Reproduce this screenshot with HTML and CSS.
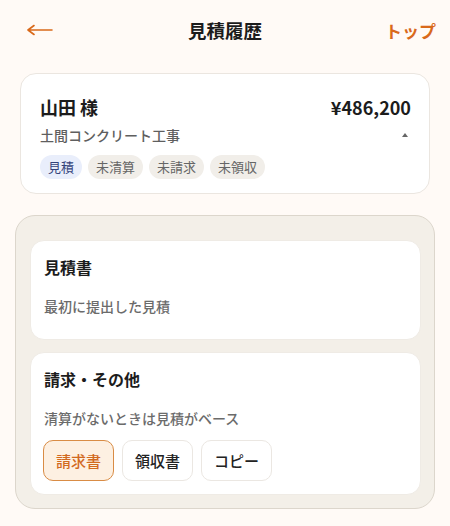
FILE: index.html
```html
<!DOCTYPE html>
<html lang="ja">
<head>
<meta charset="utf-8">
<title>見積履歴</title>
<link rel="stylesheet" href="styles.css">
</head>
<body>
<header class="header">
  <span class="back" aria-label="戻る">
    <svg width="26" height="14" viewBox="0 0 26 14"><path d="M1 7 H25 M1 7 L7 2.5 M1 7 L7 11.5" fill="none" stroke="#d9691a" stroke-width="1.6" stroke-linecap="round" stroke-linejoin="round"/></svg>
  </span>
  <h1 class="title">見積履歴</h1>
  <span class="top-link">トップ</span>
</header>

<section class="summary">
  <div class="row">
    <span class="name">山田 様</span>
    <span class="amount">¥486,200</span>
  </div>
  <div class="row sub-row">
    <span class="work">土間コンクリート工事</span>
    <span class="caret"></span>
  </div>
  <div class="chips">
    <span class="chip chip-blue">見積</span>
    <span class="chip">未清算</span>
    <span class="chip">未請求</span>
    <span class="chip">未領収</span>
  </div>
</section>

<section class="panel">
  <div class="doc-card doc-first">
    <h2 class="doc-title">見積書</h2>
    <p class="doc-desc">最初に提出した見積</p>
  </div>
  <div class="doc-card">
    <h2 class="doc-title">請求・その他</h2>
    <p class="doc-desc">清算がないときは見積がベース</p>
    <div class="buttons">
      <span class="btn btn-active">請求書</span>
      <span class="btn">領収書</span>
      <span class="btn">コピー</span>
    </div>
  </div>
</section>
</body>
</html>
```

FILE: styles.css
```css
* { box-sizing: border-box; }
html, body { margin: 0; padding: 0; }
body {
  width: 450px;
  min-height: 526px;
  background: #fffaf6;
  font-family: "Noto Sans CJK JP", "Noto Sans", sans-serif;
  color: #1c1c1c;
}
.header {
  height: 60px;
  display: grid;
  grid-template-columns: 1fr auto 1fr;
  align-items: center;
  padding: 0 14px;
}
.back { display: flex; padding-left: 13px; }
.title {
  margin: 0;
  font-size: 18.5px;
  font-weight: 700;
  line-height: 26px;
}
.top-link {
  justify-self: end;
  font-size: 17px;
  font-weight: 700;
  color: #d9691a;
}
.summary {
  margin: 13px 20px 0;
  background: #fff;
  border: 1px solid #ebe6e0;
  border-radius: 16px;
  padding: 20px 18px 14px 19px;
}
.row {
  display: flex;
  justify-content: space-between;
  align-items: center;
}
.name, .amount {
  font-size: 18px;
  font-weight: 700;
  line-height: 26px;
}
.sub-row { margin-top: 5px; }
.work {
  font-size: 14px;
  font-weight: 500;
  line-height: 20px;
  color: #5f5f5f;
}
.caret {
  width: 0;
  height: 0;
  border-left: 3px solid transparent;
  border-right: 3px solid transparent;
  border-bottom: 4px solid #666;
  margin-right: 3px;
}
.chips {
  display: flex;
  gap: 6px;
  margin-top: 10px;
}
.chip {
  height: 24px;
  line-height: 24px;
  padding: 0 8px;
  border-radius: 12px;
  font-size: 13px;
  color: #666;
  background: #f1eee9;
}
.chip-blue {
  background: #e9eefb;
  color: #34437a;
}
.panel {
  margin: 21px 15px 0;
  background: #f3efe8;
  border: 1px solid #dcd6cc;
  border-radius: 20px;
  padding: 24px 13px 13px 14px;
  display: flex;
  flex-direction: column;
  gap: 12px;
}
.doc-card {
  background: #fff;
  border-radius: 14px;
  padding: 14px 12px 13px 13px;
  border: 1px solid #efebe5;
}
.doc-first { padding-bottom: 23px; }
.doc-title {
  margin: 0;
  font-size: 16px;
  font-weight: 700;
  line-height: 24px;
}
.doc-desc {
  margin: 17px 0 0;
  font-size: 14px;
  font-weight: 500;
  line-height: 20px;
  color: #6b6b6b;
}
.buttons {
  display: flex;
  gap: 8px;
  margin-top: 12px;
  margin-left: -1px;
}
.btn {
  height: 41px;
  line-height: 39px;
  padding: 0 12px;
  border: 1px solid #ebe7e2;
  border-radius: 10px;
  background: #fff;
  font-size: 15px;
  font-weight: 500;
  color: #222;
}
.btn-active {
  background: #fdf0e2;
  border-color: #d98c45;
  color: #d2691e;
}
```
